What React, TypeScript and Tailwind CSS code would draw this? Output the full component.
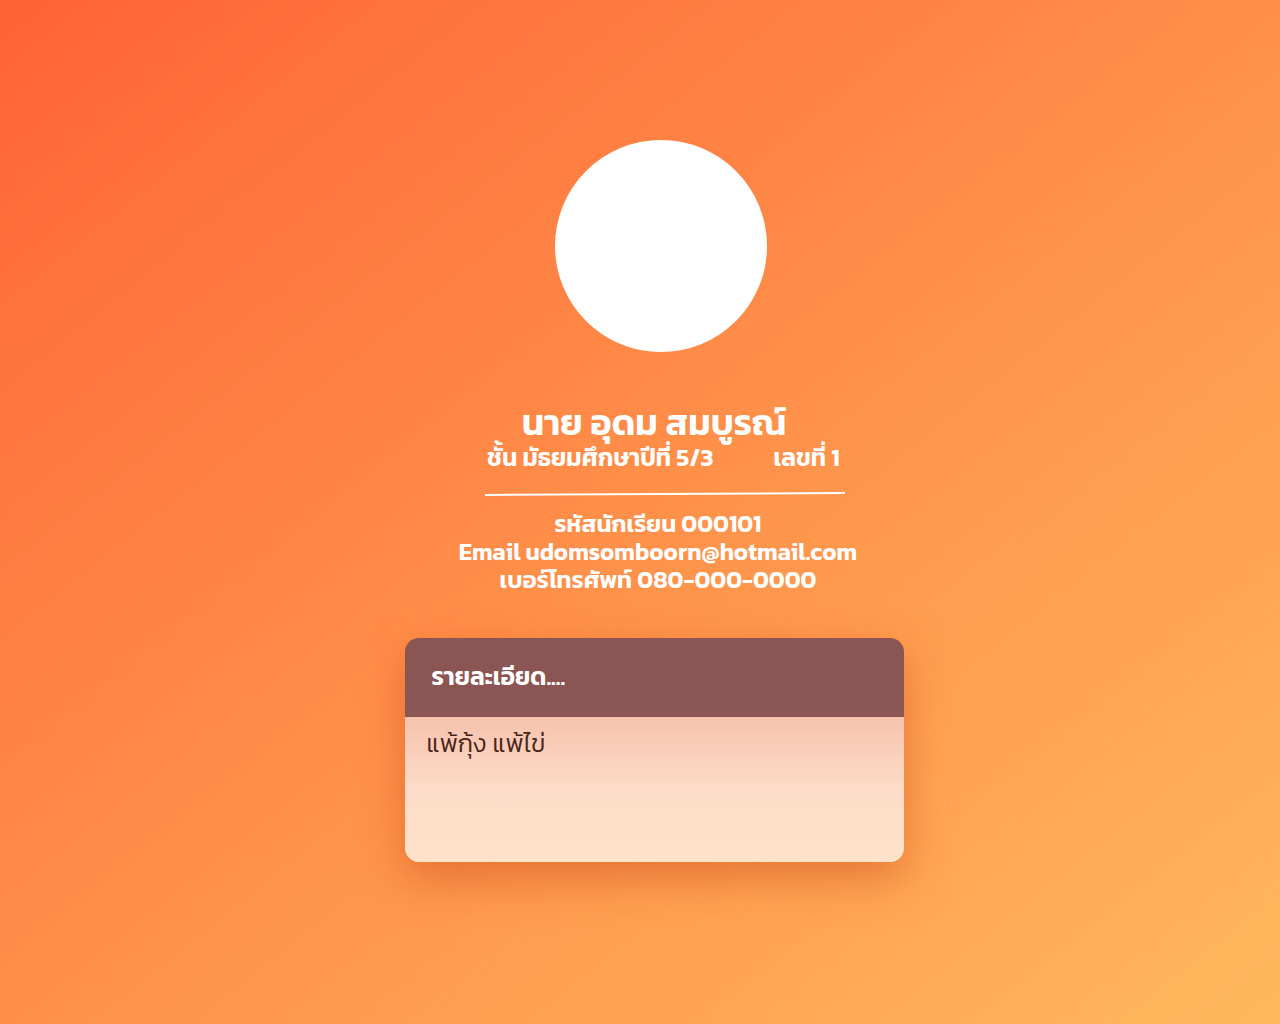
const Profile = () => {
  return (
    <div
      className="min-h-screen w-full bg-gradient-to-br from-[#ff6237] to-[#ffb85c] flex flex-col items-center pt-[140px] pl-[42px]"
      style={{ fontFamily: "Kanit, 'Noto Sans Thai', 'Noto Sans', 'Liberation Sans', sans-serif" }}
    >
      <div className="w-[212px] h-[212px] rounded-full bg-white"></div>

      <div className="mt-[52px] flex flex-col items-center text-white">
        <h1 className="text-[36px] leading-[36px] font-semibold -ml-[14px]">นาย อุดม สมบูรณ์</h1>
        <div className="mt-[4px] text-[24.5px] leading-[28px] font-semibold flex gap-[60px] ml-[5px]">
          <span>ชั้น มัธยมศึกษาปีที่ 5/3</span>
          <span>เลขที่ 1</span>
        </div>
        <div className="w-[360px] h-[2px] bg-white mt-[21px] -rotate-[0.3deg] ml-[8px]"></div>
        <div className="mt-[15px] flex flex-col items-center text-[24px] leading-[28px] font-semibold -ml-[6px]">
          <p>รหัสนักเรียน 000101</p>
          <p>Email udomsomboorn@hotmail.com</p>
          <p>เบอร์โทรศัพท์ 080-000-0000</p>
        </div>
      </div>

      <div className="mt-[44px] w-[499px] h-[224px] rounded-[14px] overflow-hidden shadow-[0_16px_44px_rgba(205,75,25,0.5)] flex flex-col -ml-[14px]">
        <div className="h-[79px] bg-[#8b5553] px-[27px] flex items-center">
          <h2 className="text-white text-[24.5px] font-semibold">รายละเอียด....</h2>
        </div>
        <div className="flex-1 bg-gradient-to-b from-[#f6c2ad] via-[#fcdcc8] to-[#fee2ca] px-[22px] pt-[10px]">
          <p className="text-[#4a2418] text-[25px] leading-[32px] font-light">แพ้กุ้ง แพ้ไข่</p>
        </div>
      </div>
    </div>
  );
};

export default function App() {
  return <Profile />;
}
